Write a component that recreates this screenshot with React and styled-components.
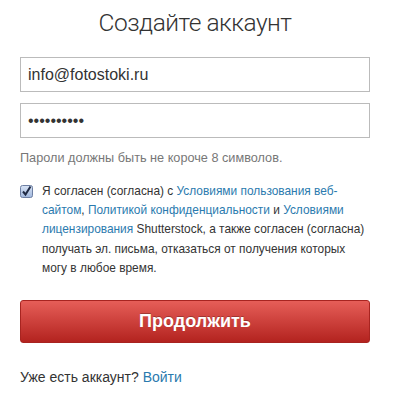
import React from "react";
import styled, { createGlobalStyle } from "styled-components";

const Global = createGlobalStyle`
  body {
    margin: 0;
    background: #fff;
    font-family: "Liberation Sans", Arial, sans-serif;
    color: #333;
  }
`;

const Page = styled.div`
  width: 350px;
  padding: 6px 44px 0 20px;
`;

const Title = styled.h1`
  margin: 0 0 17px;
  font-family: Roboto, sans-serif;
  font-weight: 300;
  font-size: 24.5px;
  letter-spacing: -0.5px;
  line-height: 34px;
  text-align: center;
  color: #333;
`;

const Field = styled.input`
  display: block;
  box-sizing: border-box;
  width: 100%;
  height: 35px;
  margin: 0 0 11px;
  padding: 0 7px;
  border: 1px solid #bbb;
  border-radius: 0;
  font-family: "Liberation Sans", Arial, sans-serif;
  font-size: 16px;
  color: #333;
  outline: none;
`;

const Hint = styled.p`
  margin: 10px 0 14px;
  font-size: 12.7px;
  line-height: 19px;
  color: #777;
`;

const Agree = styled.div`
  display: flex;
  gap: 9px;
  align-items: flex-start;
`;

const Box = styled.span`
  flex: none;
  width: 13px;
  height: 13px;
  margin-top: 3px;
  display: flex;
`;

const Terms = styled.p`
  margin: 0;
  font-size: 11.9px;
  line-height: 19.2px;
  color: #333;
  white-space: nowrap;
`;

const Link = styled.a`
  color: #2a7aae;
  text-decoration: none;
`;

const Button = styled.button`
  display: block;
  width: 100%;
  height: 43px;
  margin-top: 22px;
  border: 1px solid #a82420;
  border-radius: 3px;
  background: linear-gradient(#e65e58, #b3231f);
  color: #fff;
  font-family: "Liberation Sans", Arial, sans-serif;
  font-weight: bold;
  font-size: 18px;
  text-shadow: 0 -1px 0 rgba(0, 0, 0, 0.25);
  cursor: pointer;
`;

const Footer = styled.p`
  margin: 25px 0 0;
  font-size: 14px;
  line-height: 18px;
  color: #333;
`;

const CheckIcon = () => (
  <svg width="13" height="13" viewBox="0 0 13 13">
    <defs>
      <linearGradient id="cb" x1="0" y1="0" x2="0" y2="1">
        <stop offset="0" stopColor="#d9e4f5" />
        <stop offset="1" stopColor="#9fb6dc" />
      </linearGradient>
    </defs>
    <rect x="0.5" y="0.5" width="12" height="12" rx="2" fill="url(#cb)" stroke="#6d7fa3" />
    <path d="M3 6.5 L5.5 9.5 L10.5 1.5" fill="none" stroke="#1f2a44" strokeWidth="2" />
  </svg>
);

export default function App() {
  return (
    <Page>
      <Global />
      <Title>Создайте аккаунт</Title>
      <Field type="text" defaultValue="info@fotostoki.ru" />
      <Field type="password" defaultValue="1234567890" />
      <Hint>Пароли должны быть не короче 8 символов.</Hint>
      <Agree>
        <Box>
          <CheckIcon />
        </Box>
        <Terms>
          Я согласен (согласна) с <Link href="#">Условиями пользования веб-<br />сайтом</Link>,{" "}
          <Link href="#">Политикой конфиденциальности</Link> и <Link href="#">Условиями</Link>
          <br />
          <Link href="#">лицензирования</Link> Shutterstock, а также согласен (согласна)
          <br />
          получать эл. письма, отказаться от получения которых
          <br />
          могу в любое время.
        </Terms>
      </Agree>
      <Button>Продолжить</Button>
      <Footer>
        Уже есть аккаунт? <Link href="#">Войти</Link>
      </Footer>
    </Page>
  );
}
